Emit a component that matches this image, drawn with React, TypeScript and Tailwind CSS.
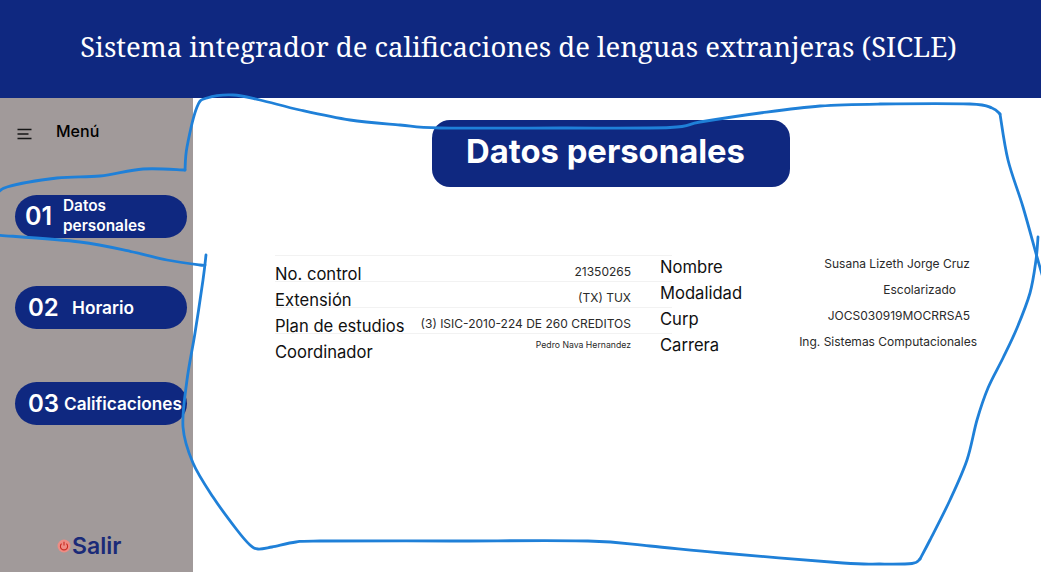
import React from "react";

function Pill({ children }: { children: React.ReactNode }) {
  return (
    <div className="w-[172px] h-[43px] ml-[15px] rounded-[22px] bg-[#0f2880] flex items-center text-white">
      {children}
    </div>
  );
}

type P = [number, number];
function smooth(p: P[]): string {
  let d = `M${p[0][0]} ${p[0][1]}`;
  for (let i = 0; i < p.length - 1; i++) {
    const a = p[Math.max(0, i - 1)];
    const b = p[i];
    const c = p[i + 1];
    const e = p[Math.min(p.length - 1, i + 2)];
    const c1x = b[0] + (c[0] - a[0]) / 6;
    const c1y = b[1] + (c[1] - a[1]) / 6;
    const c2x = c[0] - (e[0] - b[0]) / 6;
    const c2y = c[1] - (e[1] - b[1]) / 6;
    d += ` C${c1x} ${c1y} ${c2x} ${c2y} ${c[0]} ${c[1]}`;
  }
  return d;
}

const strokes: P[][] = [
  [[-4, 196], [7, 187], [57, 178], [100, 176], [143, 169], [185, 170]],
  [[185, 170], [187, 147], [197, 107], [207, 98], [233, 95], [260, 100], [300, 110], [350, 120], [400, 125], [440, 128], [560, 128], [670, 127.5], [700, 122], [760, 113], [820, 106], [880, 104], [970, 104], [992, 108], [1000, 114]],
  [[1000, 114], [1008, 160], [1023, 207], [1037, 257], [1045, 285]],
  [[1038, 237], [1036, 260], [1030, 293], [1017, 328], [1003, 358], [988, 388], [977, 420], [967, 460], [950, 500], [930, 540], [920, 559]],
  [[920, 559], [912, 563.5], [880, 564], [843, 563], [722, 553], [650, 546], [588, 541], [450, 541], [320, 541], [296, 542], [272, 547], [258, 549], [250, 545], [237, 530], [213, 497], [193, 463], [183, 427], [187, 380], [195, 333], [203, 280], [206, 255]],
  [[-4, 235], [80, 242], [133, 252], [167, 260], [200, 265], [205, 265]],
];

const left = [
  { label: "No. control", value: "21350265", cls: "text-[12px] -mt-[5px]" },
  { label: "Extensión", value: "(TX) TUX", cls: "text-[12px] -mt-[5px]" },
  { label: "Plan de estudios", value: "(3) ISIC-2010-224 DE 260 CREDITOS", cls: "text-[12px] -mt-[5px]" },
  { label: "Coordinador", value: "Pedro Nava Hernandez", cls: "text-[8.7px] -mt-[12px]" },
];
const right = [
  { label: "Nombre", value: "Susana Lizeth Jorge Cruz", cls: "pr-[7px]" },
  { label: "Modalidad", value: "Escolarizado", cls: "pr-[21px]" },
  { label: "Curp", value: "JOCS030919MOCRRSA5", cls: "pr-[7px]" },
  { label: "Carrera", value: "Ing. Sistemas Computacionales", cls: "" },
];

export default function App() {
  return (
    <div className="relative w-[1041px] h-[572px] overflow-hidden bg-white flex flex-col font-['Inter',sans-serif]">
      <header className="h-[98px] shrink-0 bg-[#0f2880] flex items-center justify-center pb-[5px] pr-[4px] text-white text-[27.5px] font-['Noto_Serif','DejaVu_Serif',serif]">
        Sistema integrador de calificaciones de lenguas extranjeras (SICLE)
      </header>
      <div className="flex flex-1 min-h-0">
        <aside className="w-[193px] shrink-0 bg-[#a19a9a] flex flex-col">
          <div className="flex items-center h-[26px] mt-[20px] ml-[17px] gap-[24px] text-black">
            <svg width="15" height="12" viewBox="0 0 15 12" className="mt-[6px]">
              <path d="M0.5 1.5H14.5M0.5 6H11.5M0.5 10.5H14.5" stroke="#161616" strokeWidth="1.7" />
            </svg>
            <span className="text-[16px] font-medium">Menú</span>
          </div>
          <div className="mt-[51px]">
            <Pill>
              <span className="ml-[10px] w-[38px] text-[25px] font-semibold">01</span>
              <span className="text-[15.4px] font-semibold leading-[20px] -mt-[2px]">Datos<br />personales</span>
            </Pill>
          </div>
          <div className="mt-[48px]">
            <Pill>
              <span className="ml-[13px] w-[44px] text-[24px] font-semibold">02</span>
              <span className="text-[17.3px] font-semibold">Horario</span>
            </Pill>
          </div>
          <div className="mt-[53px]">
            <Pill>
              <span className="ml-[13px] w-[36px] text-[24px] font-semibold">03</span>
              <span className="text-[17.2px] font-semibold whitespace-nowrap">Calificaciones</span>
            </Pill>
          </div>
          <div className="mt-auto mb-[13px] ml-[57px] flex items-center text-[#1a2a78]">
            <svg width="14" height="14" viewBox="0 0 14 14" fill="none">
              <circle cx="7" cy="7" r="6.5" fill="#ee8c84" />
              <path d="M4.6 4.6a3.6 3.6 0 1 0 4.8 0M7 2.8V6.6" stroke="#c92a22" strokeWidth="1.1" />
            </svg>
            <span className="ml-[1px] text-[23px] font-semibold leading-[26px]">Salir</span>
          </div>
        </aside>
        <main className="flex-1 min-w-0 flex flex-col">
          <div className="mt-[22px] ml-[239px] w-[358px] h-[67px] rounded-[18px] bg-[#0f2880] text-white flex items-center pl-[34px] pb-[3px] text-[32.8px] font-bold">
            Datos personales
          </div>
          <div className="mt-[68px] ml-[82px] flex">
            <div className="w-[397px] shrink-0">
              {left.map((r) => (
                <div key={r.label} className="h-[26px] border-t border-[#f2f2f2] flex items-center justify-between pr-[41px] pt-[11px] text-[#111]">
                  <span className="text-[16.6px] leading-[20px]">{r.label}</span>
                  <span className={"text-[#2a2a2a] whitespace-nowrap " + r.cls}>{r.value}</span>
                </div>
              ))}
            </div>
            <div className="w-[317px] -ml-[12px] shrink-0">
              {right.map((r) => (
                <div key={r.label} className="h-[26px] flex items-center justify-between pb-[3px] text-[#111]">
                  <span className="text-[16.6px] leading-[20px]">{r.label}</span>
                  <span className={"text-[12px] text-[#2a2a2a] whitespace-nowrap -mt-[5px] " + r.cls}>{r.value}</span>
                </div>
              ))}
            </div>
          </div>
        </main>
      </div>
      <svg className="absolute inset-0 pointer-events-none" width="1041" height="572" viewBox="0 0 1041 572" fill="none">
        {strokes.map((s, i) => (
          <path key={i} d={smooth(s)} stroke="#1f80d8" strokeWidth="2.8" strokeLinecap="round" strokeLinejoin="round" />
        ))}
      </svg>
    </div>
  );
}
